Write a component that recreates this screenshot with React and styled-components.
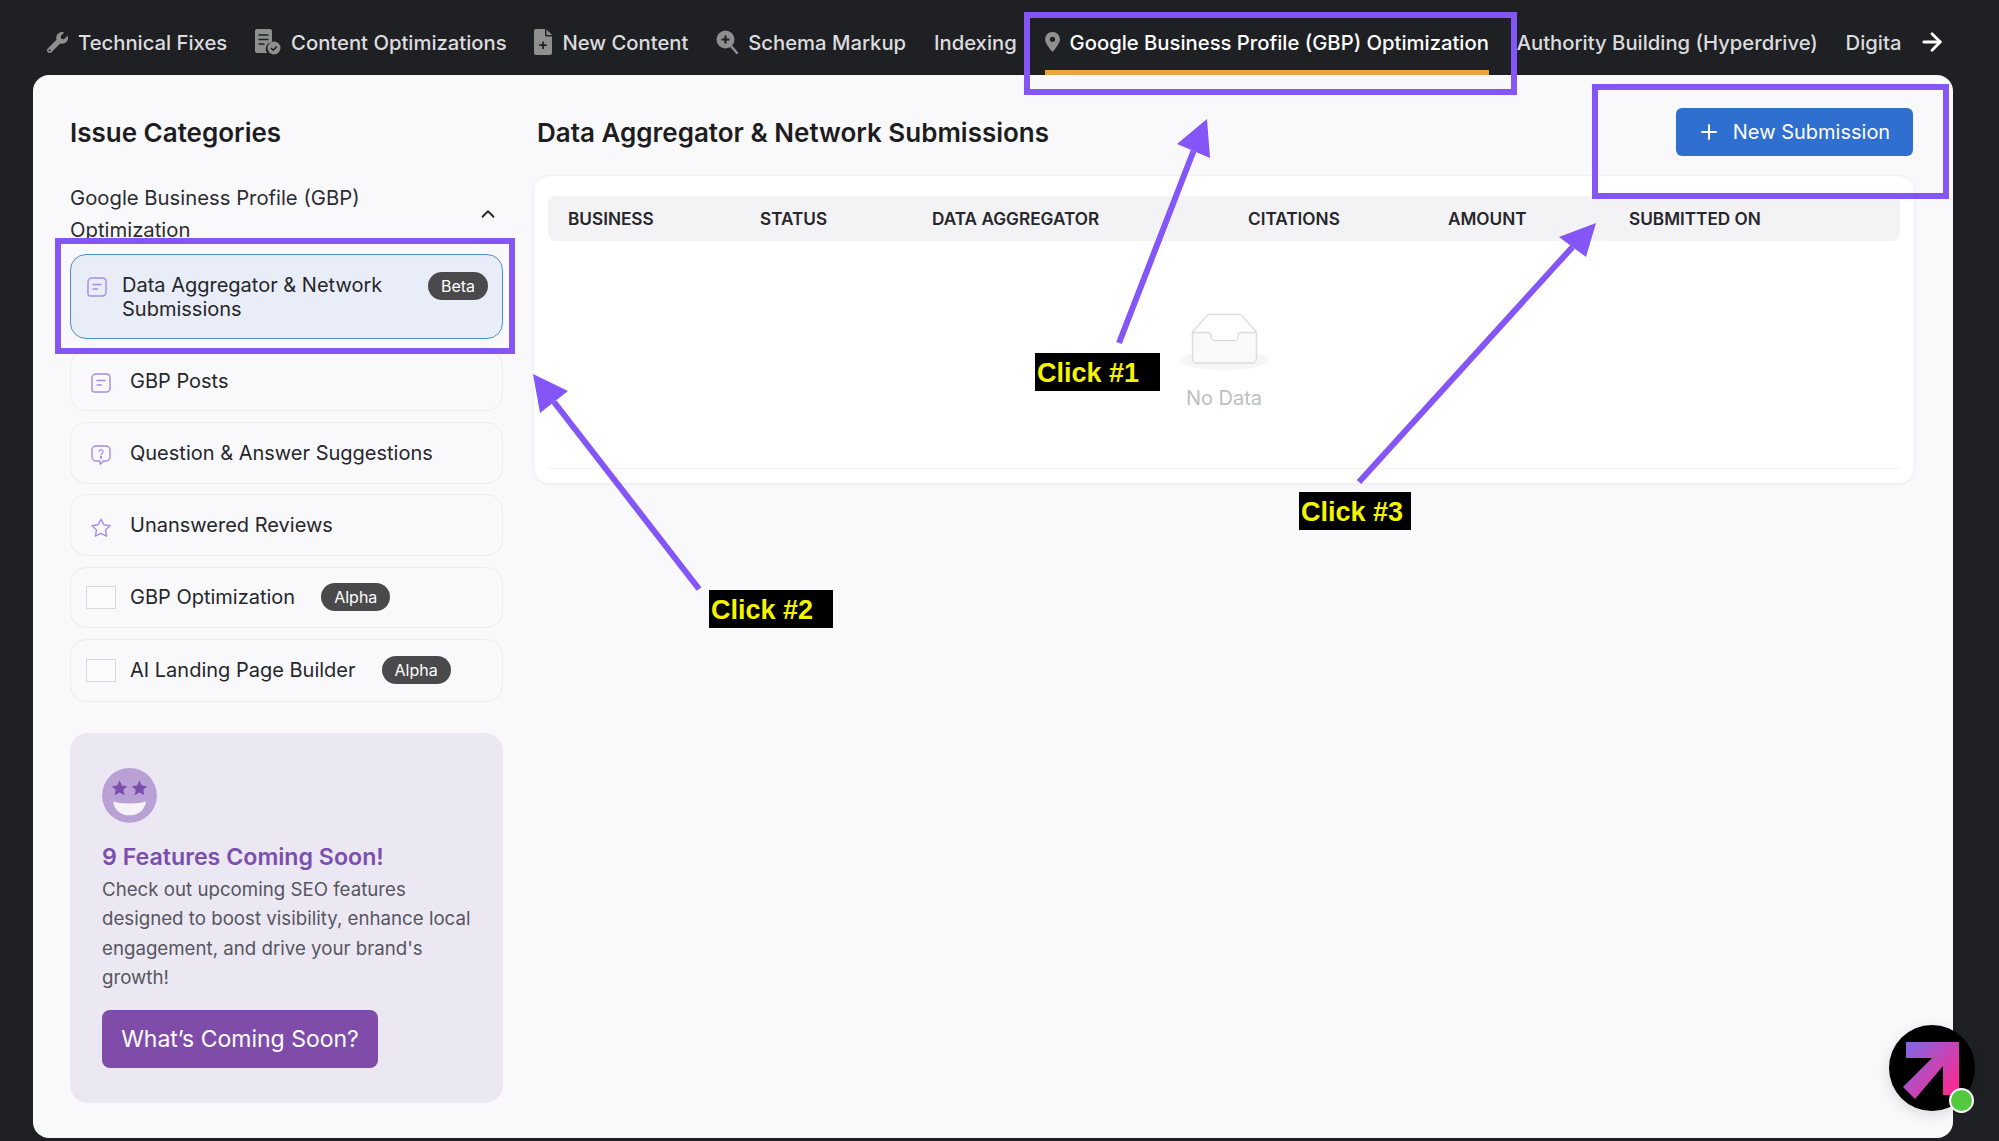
import React from 'react';
import styled, { createGlobalStyle } from 'styled-components';
import { FaWrench } from 'react-icons/fa';
import { FiPlus, FiArrowRight, FiChevronUp } from 'react-icons/fi';

const GlobalStyle = createGlobalStyle`
  html, body {
    margin: 0;
    padding: 0;
    width: 1999px;
    height: 1141px;
    overflow: hidden;
    background: #1f2024;
    font-family: Inter, 'Liberation Sans', sans-serif;
  }
  * { box-sizing: border-box; }
`;

const Page = styled.div`
  position: relative;
  width: 1999px;
  height: 1141px;
  display: flex;
  flex-direction: column;
  background: #1f2024;
`;

const TopBar = styled.div`
  height: 75px;
  flex: none;
  display: flex;
  align-items: stretch;
  padding-left: 47px;
`;

const Tabs = styled.nav`
  width: 1855px;
  display: flex;
  gap: 27.8px;
  overflow: hidden;
`;

const Tab = styled.div`
  flex: none;
  display: flex;
  align-items: center;
  gap: 10px;
  height: 75px;
  padding-top: 14px;
  font-size: 20.25px;
  font-weight: 500;
  white-space: nowrap;
  color: ${(p) => (p.$active ? '#ffffff' : '#dcdcde')};
  border-bottom: 5px solid ${(p) => (p.$active ? '#e8a540' : 'transparent')};
  svg { flex: none; color: #8f8f8f; }
`;

const NextButton = styled.div`
  margin-left: 16px;
  display: flex;
  align-items: center;
  height: 84px;
  color: #ffffff;
`;

const Panel = styled.div`
  flex: 1;
  margin: 0 46px 3px 33px;
  border-radius: 16px;
  background: #f9f9fc;
  padding: 0 38px 0 37px;
  display: flex;
  gap: 30px;
`;

const Sidebar = styled.aside`
  width: 433px;
  flex: none;
  display: flex;
  flex-direction: column;
`;

const Heading = styled.h2`
  margin: 0;
  height: 107px;
  padding-top: 42px;
  font-size: 26px;
  line-height: 32px;
  font-weight: 600;
  color: #1d1d21;
`;

const GroupHeader = styled.div`
  display: flex;
  align-items: center;
  justify-content: space-between;
  padding-right: 4px;
  height: 63px;
  margin-bottom: 9px;
  font-size: 20.3px;
  line-height: 32px;
  color: #2c2c31;
  span { width: 315px; }
  svg { color: #26262a; }
`;

const ItemList = styled.div`
  display: flex;
  flex-direction: column;
  gap: 10.75px;
`;

const Item = styled.div`
  display: flex;
  align-items: center;
  height: ${(p) => (p.$selected ? '85px' : '61.5px')};
  padding-left: ${(p) => (p.$selected ? '16px' : '15px')};
  padding-right: 14px;
  border-radius: 16px;
  border: 1.5px solid ${(p) => (p.$selected ? '#4d8fd0' : '#ececf0')};
  background: ${(p) => (p.$selected ? '#e8edf7' : '#f9f9fc')};
  font-size: 20px;
  color: #26262b;
  &:last-child { height: 63px; }
`;

const ItemIcon = styled.span`
  width: ${(p) => (p.$selected ? '35px' : '44px')};
  flex: none;
  display: flex;
  align-self: ${(p) => (p.$selected ? 'flex-start' : 'center')};
  padding-left: ${(p) => (p.$selected ? '0' : '5px')};
  padding-top: ${(p) => (p.$selected ? '22px' : '5px')};
  color: #a48ce6;
`;

const Placeholder = styled.span`
  width: 30px;
  height: 23px;
  margin-right: 14px;
  flex: none;
  border: 1px solid #d9d9dc;
  background: #fbfbfc;
`;

const ItemLabel = styled.span`
  line-height: 24px;
  flex: ${(p) => (p.$grow ? 1 : 'none')};
`;

const Pill = styled.span`
  flex: none;
  height: 28px;
  padding: 0 13px;
  margin-left: ${(p) => (p.$tight ? '0' : '26px')};
  align-self: ${(p) => (p.$tight ? 'flex-start' : 'center')};
  margin-top: ${(p) => (p.$tight ? '17px' : '0')};
  display: inline-flex;
  align-items: center;
  border-radius: 14px;
  background: #4a4a4d;
  color: #ffffff;
  font-size: 16px;
`;

const ComingSoon = styled.div`
  margin-top: 31px;
  height: 370px;
  border-radius: 18px;
  background: #ece8f3;
  padding: 35px 20px 35px 32px;
  display: flex;
  flex-direction: column;
  align-items: flex-start;
`;

const ComingTitle = styled.div`
  margin-top: 18px;
  font-size: 23.2px;
  line-height: 32px;
  font-weight: 600;
  color: #7a4fae;
`;

const ComingText = styled.p`
  margin: 2px 0 0;
  font-size: 18.7px;
  line-height: 29.6px;
  color: #56565f;
`;

const ComingButton = styled.div`
  margin-top: 17px;
  height: 58px;
  width: 276px;
  display: flex;
  align-items: center;
  justify-content: center;
  border-radius: 8px;
  background: #7f4ca9;
  color: #ffffff;
  font-size: 23px;
`;

const Main = styled.main`
  flex: 1;
  min-width: 0;
  display: flex;
  flex-direction: column;
`;

const MainHeader = styled.div`
  height: 100px;
  display: flex;
  align-items: flex-start;
  justify-content: space-between;
  padding-top: 33px;
  padding-left: 4px;
`;

const MainTitle = styled.h1`
  margin: 9px 0 0;
  font-size: 26px;
  line-height: 32px;
  font-weight: 600;
  color: #1d1d21;
`;

const PrimaryButton = styled.div`
  width: 237px;
  height: 48px;
  margin-right: 2px;
  display: flex;
  align-items: center;
  justify-content: center;
  gap: 12px;
  border-radius: 6px;
  background: #2f6fd0;
  color: #ffffff;
  font-size: 20px;
  svg { margin-left: -2px; }
`;

const TableCard = styled.div`
  height: 309px;
  border-radius: 16px;
  background: #ffffff;
  border: 1px solid #f0f0f3;
  box-shadow: 0 1px 3px rgba(20, 20, 40, 0.04);
  padding: 20px 14px 0;
  display: flex;
  flex-direction: column;
`;

const HeaderRow = styled.div`
  height: 45px;
  flex: none;
  display: grid;
  grid-template-columns: 192px 172px 316px 200px 181px 1fr;
  align-items: center;
  padding-left: 20px;
  border-radius: 8px;
  background: #f3f3f5;
  font-size: 17.2px;
  font-weight: 600;
  color: #26262b;
`;

const EmptyArea = styled.div`
  height: 228px;
  flex: none;
  border-bottom: 1px solid #f2f2f4;
  display: flex;
  flex-direction: column;
  align-items: center;
  padding-top: 72px;
  gap: 16px;
`;

const EmptyText = styled.div`
  font-size: 20px;
  line-height: 24px;
  color: #bfbfc1;
`;

const Highlight = styled.div`
  position: absolute;
  left: ${(p) => p.$x}px;
  top: ${(p) => p.$y}px;
  width: ${(p) => p.$w}px;
  height: ${(p) => p.$h}px;
  border: 6.5px solid #8455f7;
  pointer-events: none;
`;

const ClickLabel = styled.div`
  position: absolute;
  left: ${(p) => p.$x}px;
  top: ${(p) => p.$y}px;
  width: ${(p) => p.$w}px;
  height: 38px;
  padding: 2px 0 0 2px;
  display: flex;
  align-items: center;
  background: #000000;
  color: #f4f400;
  font-family: 'Liberation Sans', Arial, sans-serif;
  font-weight: 700;
  font-size: 27px;
`;

const ArrowLayer = styled.svg`
  position: absolute;
  inset: 0;
  pointer-events: none;
`;

const ChatBadge = styled.div`
  position: absolute;
  left: 1889px;
  top: 1025px;
  width: 86px;
  height: 86px;
  border-radius: 50%;
  background: #000000;
  box-shadow: 0 4px 14px rgba(0, 0, 0, 0.12);
`;

const OnlineDot = styled.span`
  position: absolute;
  right: 1px;
  bottom: -2px;
  width: 25px;
  height: 25px;
  border-radius: 50%;
  background: #52c93f;
  border: 2.5px solid #ffffff;
`;

const DocCheckIcon = () => (
  <svg width="26" height="26" viewBox="0 0 26 26">
    <path d="M2 0h13a2 2 0 0 1 2 2v11a7 7 0 0 0-5 11H2a2 2 0 0 1-2-2V2a2 2 0 0 1 2-2z" fill="currentColor" />
    <path d="M3.5 6h10M3.5 10.500h10M3.500 15h6" stroke="#1f2024" strokeWidth="1.6" />
    <circle cx="19" cy="19" r="6.5" fill="currentColor" />
    <path d="M16 19l2.2 2.2 3.6-3.8" stroke="#1f2024" strokeWidth="1.5" fill="none" />
  </svg>
);

const NewDocIcon = () => (
  <svg width="18" height="26" viewBox="0 0 18 26">
    <path d="M2 0h9v6a1.500 1.500 0 0 0 1.500 1.500H18V24a2 2 0 0 1-2 2H2a2 2 0 0 1-2-2V2a2 2 0 0 1 2-2z" fill="currentColor" />
    <path d="M12.500 0.500L18 6h-5.500z" fill="currentColor" />
    <path d="M9 12.500v7.500M5.200 16.200h7.600" stroke="#1f2024" strokeWidth="1.8" />
  </svg>
);

const ZoomIcon = () => (
  <svg width="22" height="24" viewBox="0 0 22 24">
    <circle cx="9.500" cy="9.500" r="9" fill="currentColor" />
    <path d="M9.500 5.500v8M5.500 9.500h8" stroke="#1f2024" strokeWidth="2.2" />
    <path d="M15 16l6 7" stroke="currentColor" strokeWidth="2.6" strokeLinecap="round" />
  </svg>
);

const PinIcon = () => (
  <svg width="15" height="20" viewBox="0 0 15 20">
    <path d="M7.500 0A7.300 7.300 0 0 0 0 7.300C0 12 7.500 20 7.500 20S15 12 15 7.300A7.300 7.300 0 0 0 7.500 0z" fill="currentColor" />
    <circle cx="7.500" cy="7.300" r="2.600" fill="#1f2024" />
  </svg>
);

const NoteIcon = () => (
  <svg width="20" height="20" viewBox="0 0 20 20" fill="none" stroke="currentColor" strokeWidth="1.4">
    <path d="M5 1h10.500A3.500 3.500 0 0 1 19 4.500v11a3.500 3.500 0 0 1-3.500 3.500H3a2 2 0 0 1-2-2V5a4 4 0 0 1 4-4z" />
    <path d="M5.500 7.500h9M5.500 12h5.500" />
  </svg>
);

const QuestionIcon = () => (
  <svg width="20" height="20" viewBox="0 0 20 20" fill="none" stroke="currentColor" strokeWidth="1.4">
    <path d="M5 1h10a4 4 0 0 1 4 4v7a4 4 0 0 1-4 4h-2.500L9.500 19l-1-3H5a4 4 0 0 1-4-4V5a4 4 0 0 1 4-4z" />
    <path d="M8 6.800a2 2 0 1 1 3.200 1.600c-.8.500-1.200 1-1.200 1.800" strokeWidth="1.2" />
    <circle cx="10" cy="12.400" r=".6" fill="currentColor" />
  </svg>
);

const StarIcon = () => (
  <svg width="20" height="20" viewBox="0 0 20 20" fill="none" stroke="currentColor" strokeWidth="1.4" strokeLinejoin="round">
    <path d="M10 1.200l2.800 5.600 6.200.9-4.500 4.300 1.100 6.200L10 15.300l-5.600 2.900 1.100-6.200L1 7.700l6.200-.9z" />
  </svg>
);

const StarFace = () => (
  <svg width="55" height="55" viewBox="0 0 55 55">
    <circle cx="27.500" cy="27.500" r="27.500" fill="#b9a0d5" />
    <path d="M17.500 12.500l2.400 5 5.400.7-4 3.700 1.100 5.400-4.900-2.700-4.900 2.700 1.100-5.400-4-3.700 5.400-.7z" fill="#7a4fae" />
    <path d="M37.500 12.500l2.400 5 5.400.7-4 3.700 1.100 5.400-4.900-2.700-4.900 2.700 1.100-5.400-4-3.700 5.400-.7z" fill="#7a4fae" />
    <path d="M11 33.500c4 1.200 9 2 16.500 2s12.500-.8 16.500-2C43 42 36 47.500 27.500 47.500S12 42 11 33.500z" fill="#f6f2fa" />
  </svg>
);

const EmptyInbox = () => (
  <svg width="89" height="57" viewBox="0 0 64 41">
    <g transform="translate(0 1)" fill="none" fillRule="evenodd">
      <ellipse fill="#f6f6f6" cx="32" cy="33" rx="32" ry="7" />
      <g fillRule="nonzero" stroke="#dcdcdc">
        <path d="M55 12.760L44.854 1.258C44.367.474 43.656 0 42.907 0H21.093c-.749 0-1.460.474-1.947 1.257L9 12.761V22h46v-9.240z" />
        <path d="M41.613 15.931c0-1.605.994-2.930 2.227-2.931H55v18.137C55 33.260 53.680 35 52.050 35h-40.100C10.320 35 9 33.259 9 31.137V13h11.160c1.233 0 2.227 1.323 2.227 2.928v.022c0 1.605 1.005 2.901 2.237 2.901h14.752c1.232 0 2.237-1.308 2.237-2.913v-.007z" fill="#fafafa" />
      </g>
    </g>
  </svg>
);

const BadgeArrow = () => (
  <svg width="86" height="86" viewBox="0 0 86 86">
    <defs>
      <linearGradient id="badgeGrad" x1="0.1" y1="0.15" x2="0.95" y2="0.85">
        <stop offset="0" stopColor="#8a63dc" />
        <stop offset="1" stopColor="#ff2790" />
      </linearGradient>
    </defs>
    <path d="M17 17h53v53H54V41L26 74 14 62 43 33H17z" fill="url(#badgeGrad)" />
  </svg>
);

const tabs = [
  { label: 'Technical Fixes', icon: <FaWrench size={21} /> },
  { label: 'Content Optimizations', icon: <DocCheckIcon /> },
  { label: 'New Content', icon: <NewDocIcon /> },
  { label: 'Schema Markup', icon: <ZoomIcon /> },
  { label: 'Indexing' },
  { label: 'Google Business Profile (GBP) Optimization', icon: <PinIcon />, active: true },
  { label: 'Authority Building (Hyperdrive)' },
  { label: 'Digital PR' },
];

const columns = ['BUSINESS', 'STATUS', 'DATA AGGREGATOR', 'CITATIONS', 'AMOUNT', 'SUBMITTED ON'];

const arrows = [
  { tail: [1119, 343], tip: [1207, 119], a: [1177, 144], b: [1210, 158] },
  { tail: [699, 589], tip: [533, 374], a: [568, 391], b: [540, 413] },
  { tail: [1359, 482], tip: [1596, 223], a: [1559, 237], b: [1586, 257] },
];

export default function App() {
  return (
    <Page>
      <GlobalStyle />
      <TopBar>
        <Tabs>
          {tabs.map((t) => (
            <Tab key={t.label} $active={t.active}>
              {t.icon}
              {t.label}
            </Tab>
          ))}
        </Tabs>
        <NextButton>
          <FiArrowRight size={28} strokeWidth={2.4} />
        </NextButton>
      </TopBar>
      <Panel>
        <Sidebar>
          <Heading>Issue Categories</Heading>
          <GroupHeader>
            <span>Google Business Profile (GBP) Optimization</span>
            <FiChevronUp size={22} />
          </GroupHeader>
          <ItemList>
            <Item $selected>
              <ItemIcon $selected><NoteIcon /></ItemIcon>
              <ItemLabel $grow>Data Aggregator &amp; Network Submissions</ItemLabel>
              <Pill $tight>Beta</Pill>
            </Item>
            <Item>
              <ItemIcon><NoteIcon /></ItemIcon>
              <ItemLabel>GBP Posts</ItemLabel>
            </Item>
            <Item>
              <ItemIcon><QuestionIcon /></ItemIcon>
              <ItemLabel>Question &amp; Answer Suggestions</ItemLabel>
            </Item>
            <Item>
              <ItemIcon><StarIcon /></ItemIcon>
              <ItemLabel>Unanswered Reviews</ItemLabel>
            </Item>
            <Item>
              <Placeholder />
              <ItemLabel>GBP Optimization</ItemLabel>
              <Pill>Alpha</Pill>
            </Item>
            <Item>
              <Placeholder />
              <ItemLabel>AI Landing Page Builder</ItemLabel>
              <Pill>Alpha</Pill>
            </Item>
          </ItemList>
          <ComingSoon>
            <StarFace />
            <ComingTitle>9 Features Coming Soon!</ComingTitle>
            <ComingText>
              Check out upcoming SEO features designed to boost visibility, enhance local engagement, and drive your brand's growth!
            </ComingText>
            <ComingButton>What’s Coming Soon?</ComingButton>
          </ComingSoon>
        </Sidebar>
        <Main>
          <MainHeader>
            <MainTitle>Data Aggregator &amp; Network Submissions</MainTitle>
            <PrimaryButton>
              <FiPlus size={24} />
              New Submission
            </PrimaryButton>
          </MainHeader>
          <TableCard>
            <HeaderRow>
              {columns.map((c) => (
                <span key={c}>{c}</span>
              ))}
            </HeaderRow>
            <EmptyArea>
              <EmptyInbox />
              <EmptyText>No Data</EmptyText>
            </EmptyArea>
          </TableCard>
        </Main>
      </Panel>

      <Highlight $x={1024} $y={12} $w={493} $h={83} />
      <Highlight $x={55} $y={238} $w={460} $h={116} />
      <Highlight $x={1592} $y={84} $w={357} $h={115} />
      <ArrowLayer width="1999" height="1141" viewBox="0 0 1999 1141">
        {arrows.map((r) => (
          <g key={r.tail.join()} fill="#8455f7" stroke="none">
            <line
              x1={r.tail[0]}
              y1={r.tail[1]}
              x2={(r.a[0] + r.b[0]) / 2}
              y2={(r.a[1] + r.b[1]) / 2}
              stroke="#8455f7"
              strokeWidth="6"
            />
            <polygon points={[r.tip, r.a, r.b].map((p) => p.join(',')).join(' ')} />
          </g>
        ))}
      </ArrowLayer>
      <ClickLabel $x={1035} $y={353} $w={125}>Click #1</ClickLabel>
      <ClickLabel $x={709} $y={590} $w={124}>Click #2</ClickLabel>
      <ClickLabel $x={1299} $y={492} $w={112}>Click #3</ClickLabel>

      <ChatBadge>
        <BadgeArrow />
        <OnlineDot />
      </ChatBadge>
    </Page>
  );
}
